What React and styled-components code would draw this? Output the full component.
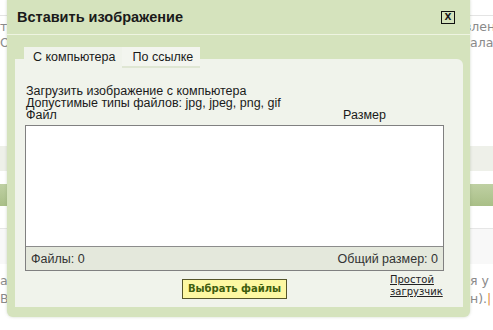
import React from 'react';
import styled, { createGlobalStyle } from 'styled-components';

const GlobalStyle = createGlobalStyle`
    html, body {
        margin: 0;
        padding: 0;
        background: #fff;
    }
`;

const Page = styled.div`
    position: relative;
    width: 493px;
    height: 330px;
    overflow: hidden;
    font-family: "DejaVu Sans", Verdana, sans-serif;
    font-size: 12.5px;
    color: #8a8a8a;
`;

const TopStrip = styled.div`
    height: 15px;
    border-bottom: 1px solid #e4e4e4;
    margin-bottom: 3px;
`;

const TextRow = styled.div`
    display: grid;
    grid-template-columns: 470px 1fr;
    height: ${({h}) => h || 16}px;
    line-height: ${({h}) => h || 16}px;
    white-space: nowrap;
    overflow: hidden;
`;

const Cell = styled.span`
    overflow: hidden;
    text-indent: ${({shift}) => shift || 0}px;
`;

const Accent = styled.span`
    color: #e0873a;
`;

const Spacer = styled.div`
    height: ${({h}) => h}px;
`;

const Band = styled.div`
    height: 25px;
    background: #eef0e9;
`;

const GreenBar = styled.div`
    height: 22px;
    background: linear-gradient(#bfd0a3, #a9bf87);
`;

const LightBlock = styled.div`
    height: 35px;
    border-top: 1px solid #e6e6e6;
    background: #f8f8f8;
`;

const Dialog = styled.div`
    position: absolute;
    top: -5px;
    left: 7px;
    width: 463px;
    padding-top: 5px;
    background: #d5e3bd;
    border-radius: 6px;
    box-shadow: 0 0 3px rgba(120, 140, 100, 0.35);
    font-family: "Liberation Sans", Arial, sans-serif;
    color: #1a1a1a;
`;

const TitleBar = styled.div`
    display: flex;
    align-items: center;
    justify-content: space-between;
    height: 34px;
    padding: 0 15px 0 10px;
    border-bottom: 1px solid #eef4e1;
`;

const Title = styled.div`
    font-size: 14.5px;
    font-weight: bold;
`;

const CloseBox = styled.div`
    width: 12px;
    height: 11px;
    border: 1px solid #111;
    display: flex;
    align-items: center;
    justify-content: center;
    font-family: "DejaVu Sans", sans-serif;
    font-size: 9px;
    font-weight: bold;
    line-height: 1;
`;

const Body = styled.div`
    padding: 12px 7px 10px 8px;
`;

const Tabs = styled.div`
    position: relative;
    z-index: 1;
    display: flex;
    padding-left: 9px;
    margin-bottom: -9px;
`;

const Tab = styled.div`
    height: 21px;
    line-height: 21px;
    padding: ${({active}) => active ? '0 7px 0 9px' : '0 7px 0 10px'};
    font-size: 12.5px;
    background: ${({active}) => active ? '#f0f3eb' : '#f3f5ef'};
    box-shadow: ${({active}) => active ? 'none' : 'inset 0 -2px 0 #dfe6d3'};
`;

const Panel = styled.div`
    background: #f0f3eb;
    border-radius: 0 6px 0 0;
    padding: 26px 19px 8px 10px;
    font-size: 12.5px;
`;

const Line = styled.div`
    line-height: 12px;
    padding-left: 1px;
`;

const Header = styled.div`
    display: flex;
    line-height: 12px;
    margin-bottom: 4px;
    padding-left: 1px;
`;

const HeadName = styled.div`
    flex: 1;
`;

const HeadSize = styled.div`
    width: 101px;
`;

const Table = styled.div`
    border: 1px solid #808080;
`;

const List = styled.div`
    height: 120px;
    background: #fff;
`;

const Footer = styled.div`
    display: flex;
    justify-content: space-between;
    align-items: center;
    height: 23px;
    padding: 0 5px;
    border-top: 1px solid #8c8c8c;
    background: #e4e8dc;
    color: #333;
`;

const Actions = styled.div`
    display: grid;
    grid-template-columns: 1fr auto 1fr;
    align-items: start;
    margin-top: 8px;
`;

const PickButton = styled.button`
    grid-column: 2;
    height: 20px;
    padding: 0 5px;
    border: 1px solid #55552a;
    background: #fdf8a2;
    color: #3f5e0e;
    font-family: "DejaVu Sans", Verdana, sans-serif;
    font-size: 10px;
    font-weight: bold;
    line-height: 18px;
    cursor: pointer;
`;

const SimpleLink = styled.a`
    justify-self: end;
    margin: -5px 3px 0 0;
    width: 51px;
    font-family: "DejaVu Sans", Verdana, sans-serif;
    font-size: 10px;
    line-height: 12px;
    color: #222;
    text-decoration: underline;
`;

const App = () => {
    return (
        <>
            <GlobalStyle/>
            <Page>
                <TopStrip/>
                <TextRow><Cell>тн</Cell><Cell shift={-6}>влен</Cell></TextRow>
                <TextRow><Cell>ОІ</Cell><Cell>ала<Accent>.</Accent></Cell></TextRow>
                <Spacer h={95}/>
                <Band/>
                <Spacer h={13}/>
                <GreenBar/>
                <Spacer h={22}/>
                <LightBlock/>
                <Spacer h={8}/>
                <TextRow h={18}><Cell>а,</Cell><Cell>я у</Cell></TextRow>
                <TextRow h={18}><Cell>В</Cell><Cell>н).<Accent>|</Accent></Cell></TextRow>

                <Dialog>
                    <TitleBar>
                        <Title>Вставить изображение</Title>
                        <CloseBox>X</CloseBox>
                    </TitleBar>
                    <Body>
                        <Tabs>
                            <Tab active>С компьютера</Tab>
                            <Tab>По ссылке</Tab>
                        </Tabs>
                        <Panel>
                            <Line>Загрузить изображение с компьютера</Line>
                            <Line>Допустимые типы файлов: jpg, jpeg, png, gif</Line>
                            <Header>
                                <HeadName>Файл</HeadName>
                                <HeadSize>Размер</HeadSize>
                            </Header>
                            <Table>
                                <List/>
                                <Footer>
                                    <span>Файлы: 0</span>
                                    <span>Общий размер: 0</span>
                                </Footer>
                            </Table>
                            <Actions>
                                <PickButton>Выбрать файлы</PickButton>
                                <SimpleLink href="#">Простой загрузчик</SimpleLink>
                            </Actions>
                        </Panel>
                    </Body>
                </Dialog>
            </Page>
        </>
    )
}

export default App;
